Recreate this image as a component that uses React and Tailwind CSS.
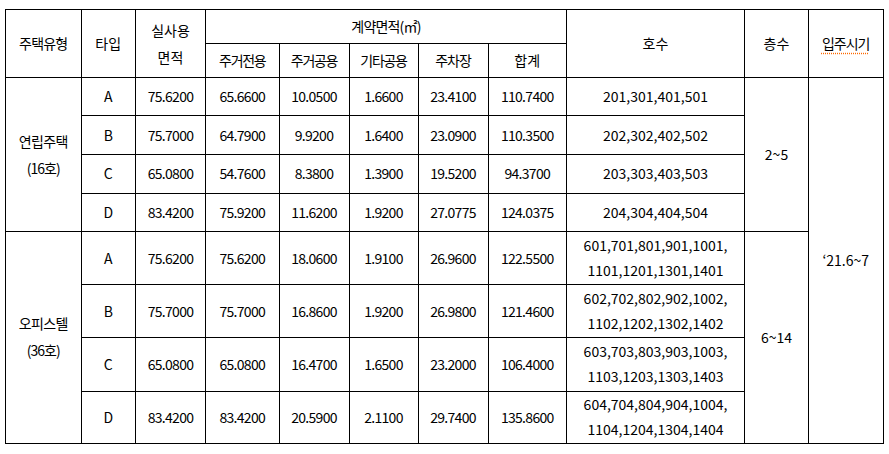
import React from "react";

const groups = [
  {
    name: "연립주택",
    count: "(16호)",
    floors: "2~5",
    rows: [
      ["A", "75.6200", "65.6600", "10.0500", "1.6600", "23.4100", "110.7400", ["201,301,401,501"]],
      ["B", "75.7000", "64.7900", "9.9200", "1.6400", "23.0900", "110.3500", ["202,302,402,502"]],
      ["C", "65.0800", "54.7600", "8.3800", "1.3900", "19.5200", "94.3700", ["203,303,403,503"]],
      ["D", "83.4200", "75.9200", "11.6200", "1.9200", "27.0775", "124.0375", ["204,304,404,504"]],
    ],
    heights: ["h-[38px]", "h-[39px]", "h-[38.5px]", "h-[38.5px]"],
  },
  {
    name: "오피스텔",
    count: "(36호)",
    floors: "6~14",
    rows: [
      ["A", "75.6200", "75.6200", "18.0600", "1.9100", "26.9600", "122.5500", ["601,701,801,901,1001,", "1101,1201,1301,1401"]],
      ["B", "75.7000", "75.7000", "16.8600", "1.9200", "26.9800", "121.4600", ["602,702,802,902,1002,", "1102,1202,1302,1402"]],
      ["C", "65.0800", "65.0800", "16.4700", "1.6500", "23.2000", "106.4000", ["603,703,803,903,1003,", "1103,1203,1303,1403"]],
      ["D", "83.4200", "83.4200", "20.5900", "2.1100", "29.7400", "135.8600", ["604,704,804,904,1004,", "1104,1204,1304,1404"]],
    ],
    heights: ["h-[53px]", "h-[53px]", "h-[53.5px]", "h-[52px]"],
  },
];

const cell = "border border-black p-0 text-center align-middle";
const num = "tracking-[-0.7px]";

const App = () => {
  return (
    <div
      className="bg-white w-[889px] h-[454px] pt-[9px] pl-[5px] text-black text-[14px] leading-[27px]"
      style={{ fontFamily: '"Malgun Gothic", "Noto Sans CJK KR", "Noto Sans", sans-serif' }}
    >
      <table className="table-fixed border-collapse w-[877.5px]">
        <colgroup>
          <col className="w-[75.5px]" />
          <col className="w-[54.5px]" />
          <col className="w-[70px]" />
          <col className="w-[73.5px]" />
          <col className="w-[70px]" />
          <col className="w-[69px]" />
          <col className="w-[70px]" />
          <col className="w-[78.5px]" />
          <col className="w-[178px]" />
          <col className="w-[64px]" />
          <col className="w-[74.5px]" />
        </colgroup>
        <thead>
          <tr className="h-[34px]">
            <th rowSpan={2} className={`${cell} font-normal tracking-[-0.8px]`}>주택유형</th>
            <th rowSpan={2} className={`${cell} font-normal`}>타입</th>
            <th rowSpan={2} className={`${cell} font-normal`}>
              실사용
              <br />
              면적
            </th>
            <th colSpan={5} className={`${cell} font-normal tracking-[-0.8px]`}>계약면적(㎡)</th>
            <th rowSpan={2} className={`${cell} font-normal`}>호수</th>
            <th rowSpan={2} className={`${cell} font-normal`}>층수</th>
            <th rowSpan={2} className={`${cell} font-normal tracking-[-1px]`}>
              <span className="underline decoration-dotted decoration-orange-500 underline-offset-4">입주시기</span>
            </th>
          </tr>
          <tr className="h-[34px]">
            <th className={`${cell} font-normal tracking-[-1.3px]`}>주거전용</th>
            <th className={`${cell} font-normal tracking-[-1.3px]`}>주거공용</th>
            <th className={`${cell} font-normal tracking-[-1.3px]`}>기타공용</th>
            <th className={`${cell} font-normal tracking-[-1px]`}>주차장</th>
            <th className={`${cell} font-normal`}>합계</th>
          </tr>
        </thead>
        <tbody>
          {groups.map((g, gi) =>
            g.rows.map((r, ri) => (
              <tr key={`${gi}-${ri}`} className={g.heights[ri]}>
                {ri === 0 && (
                  <td rowSpan={4} className={`${cell} tracking-[-0.6px]`}>
                    {g.name}
                    <br />
                    <span className="tracking-[-1px]">{g.count}</span>
                  </td>
                )}
                <td className={cell}>{r[0]}</td>
                <td className={`${cell} ${num}`}>{r[1]}</td>
                <td className={`${cell} ${num}`}>{r[2]}</td>
                <td className={`${cell} ${num}`}>{r[3]}</td>
                <td className={`${cell} ${num}`}>{r[4]}</td>
                <td className={`${cell} ${num}`}>{r[5]}</td>
                <td className={`${cell} ${num}`}>{r[6]}</td>
                <td className={cell}>
                  {r[7].map((line, li) => (
                    <div key={li} className={r[7].length > 1 ? "leading-[25.5px]" : ""}>
                      {line}
                    </div>
                  ))}
                </td>
                {ri === 0 && (
                  <td rowSpan={4} className={cell}>
                    {g.floors}
                  </td>
                )}
                {gi === 0 && ri === 0 && (
                  <td rowSpan={8} className={cell}>
                    ‘21.6~7
                  </td>
                )}
              </tr>
            ))
          )}
        </tbody>
      </table>
    </div>
  );
};

export default App;
